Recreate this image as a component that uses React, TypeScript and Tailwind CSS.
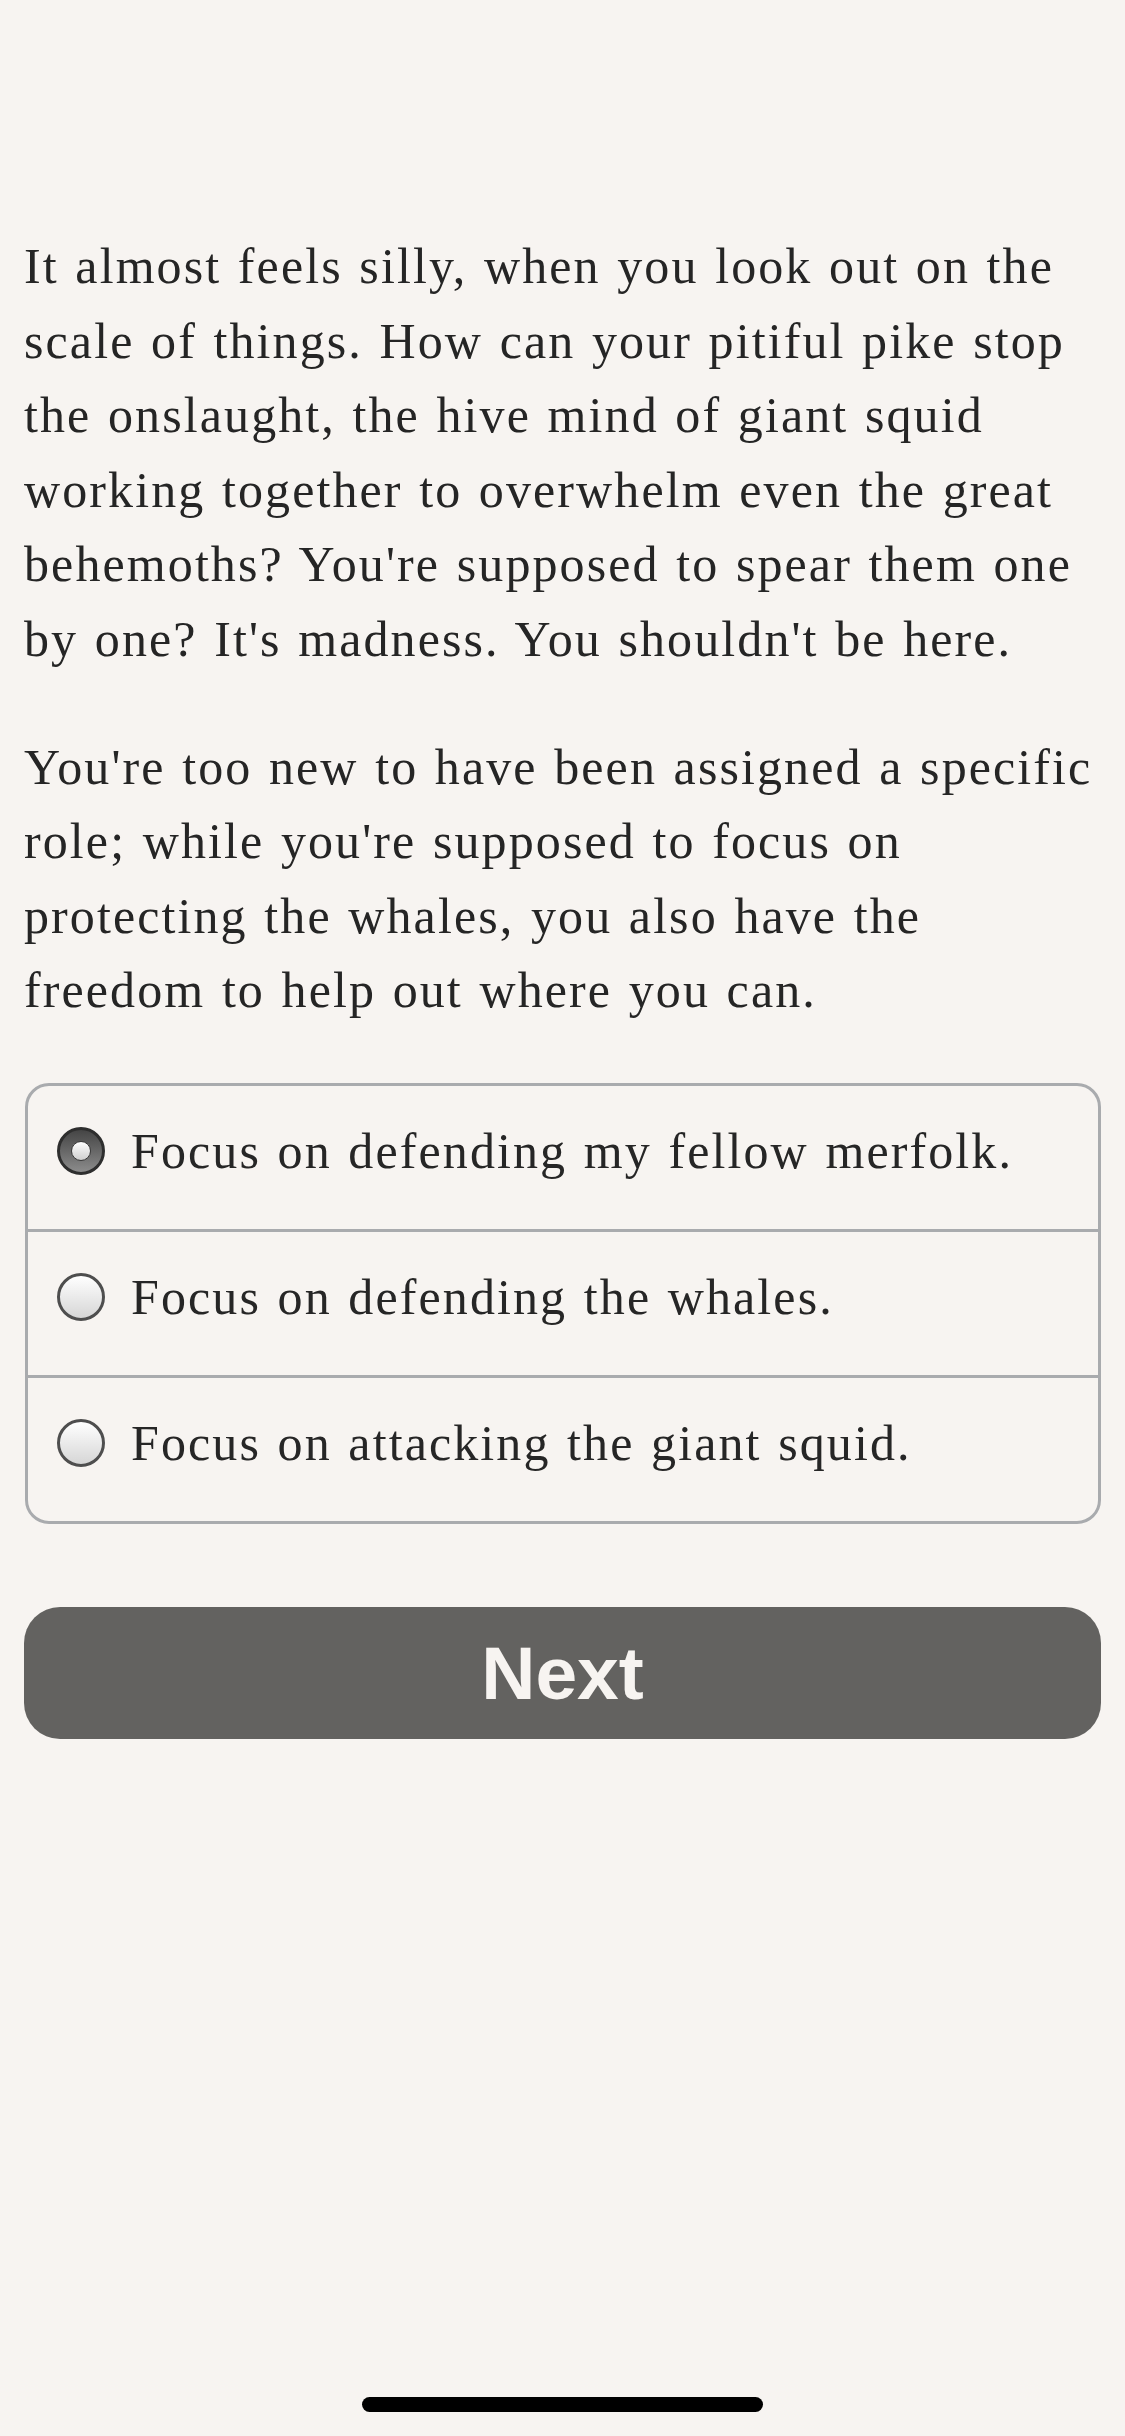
import { useState } from "react";

const storyOne = [
  "It almost feels silly, when you look out on the",
  "scale of things. How can your pitiful pike stop",
  "the onslaught, the hive mind of giant squid",
  "working together to overwhelm even the great",
  "behemoths? You're supposed to spear them one",
  "by one? It's madness. You shouldn't be here.",
];

const storyTwo = [
  "You're too new to have been assigned a specific",
  "role; while you're supposed to focus on",
  "protecting the whales, you also have the",
  "freedom to help out where you can.",
];

const choices = [
  "Focus on defending my fellow merfolk.",
  "Focus on defending the whales.",
  "Focus on attacking the giant squid.",
];

function Radio({ checked }: { checked: boolean }) {
  if (checked) {
    return (
      <span className="flex size-[48px] shrink-0 items-center justify-center rounded-full border-[3px] border-[#2e2e2e] bg-gradient-to-b from-[#454545] to-[#8c8c8c]">
        <span className="size-[20px] rounded-full border border-[#3a3a3a] bg-gradient-to-b from-[#ffffff] to-[#cfcfcf]" />
      </span>
    );
  }
  return (
    <span className="size-[48px] shrink-0 rounded-full border-[3px] border-[#4e4e4e] bg-gradient-to-b from-[#ffffff] to-[#d6d6d6]" />
  );
}

function Paragraph({ lines }: { lines: string[] }) {
  return (
    <p className="text-[50px] leading-[74.6px] tracking-[2.1px] [word-spacing:2px] text-[#252525]">
      {lines.map((l) => (
        <span key={l} className="block whitespace-nowrap">
          {l}
        </span>
      ))}
    </p>
  );
}

export default function App() {
  const [picked, setPicked] = useState(0);

  return (
    <div className="flex min-h-[2436px] w-full flex-col bg-[#f7f4f1] font-['Liberation_Serif',serif]">
      <main className="flex flex-col px-[24px] pt-[229px]">
        <Paragraph lines={storyOne} />
        <div className="mt-[53px]">
          <Paragraph lines={storyTwo} />
        </div>

        <div className="mt-[55px] ml-px overflow-hidden rounded-[24px] border-[3px] border-[#a9abae]">
          {choices.map((c, i) => (
            <button
              key={c}
              type="button"
              onClick={() => setPicked(i)}
              className={`flex h-[143px] w-full items-center gap-[26px] pb-[12px] pl-[29px] text-left ${
                i > 0 ? "h-[146px] border-t-[3px] border-[#a9abae]" : ""
              }`}
            >
              <Radio checked={picked === i} />
              <span className="whitespace-nowrap text-[50px] leading-[75px] tracking-[2.1px] [word-spacing:2px] text-[#262626]">
                {c}
              </span>
            </button>
          ))}
        </div>

        <button
          type="button"
          className="mt-[83px] flex h-[132px] w-full items-center justify-center rounded-[36px] bg-[#636260] font-['Liberation_Sans',Arial,sans-serif] text-[75px] font-bold text-[#f7f4f1]"
        >
          Next
        </button>
      </main>

      <div className="mt-auto flex justify-center pb-[24px]">
        <div className="h-[15px] w-[401px] rounded-full bg-black" />
      </div>
    </div>
  );
}
